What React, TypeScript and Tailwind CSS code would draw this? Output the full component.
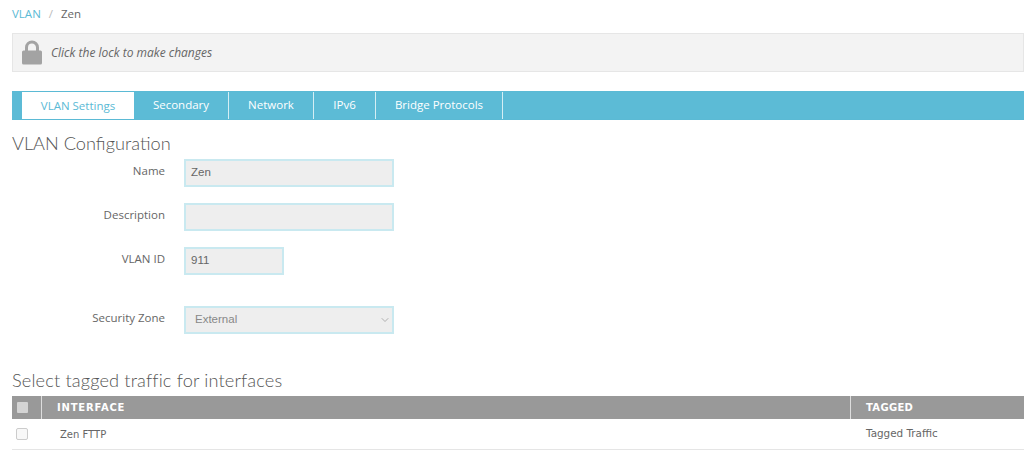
import React from 'react';
import { ChevronDown } from 'lucide-react';

const tabs = [
  { label: 'Secondary', w: 'w-[95px]' },
  { label: 'Network', w: 'w-[85px]' },
  { label: 'IPv6', w: 'w-[62px]' },
  { label: 'Bridge Protocols', w: 'w-[127px]' },
];

const Field = ({ label, children, className }: { label: string; children: React.ReactNode; className: string }) => (
  <div className={`flex items-start ${className}`}>
    <label className="w-[153px] pt-[3px] text-right text-[11.5px] leading-[18px] text-[#666]">{label}</label>
    <div className="ml-[19px]">{children}</div>
  </div>
);

const inputCls =
  'h-[28px] border-2 border-[#c9e9f0] bg-[#eeeeee] px-[5px] flex items-center text-[11.5px] text-[#666] font-["Liberation_Sans",sans-serif]';

export default function App() {
  return (
    <div className="h-[455px] w-[1024px] overflow-hidden bg-white font-['Open_Sans',sans-serif]">
      <div className="flex h-[33px] items-start pl-[12px] pt-[5px] text-[11.5px] leading-[18px]">
        <span className="text-[#5bbad5]">VLAN</span>
        <span className="mx-[8px] text-[#bbb]">/</span>
        <span className="text-[#666]">Zen</span>
      </div>

      <div className="ml-[12px] flex h-[39px] items-center border border-[#e6e6e6] bg-[#f3f3f3] pl-[9px]">
        <svg width="20" height="25" viewBox="0 0 20 25" className="mb-[1px]">
          <path d="M4.5 12V7.5a5.5 5.5 0 0 1 11 0V12" fill="none" stroke="#a3a3a3" strokeWidth="3" />
          <rect x="0" y="10.5" width="20" height="14" rx="1.5" fill="#a3a3a3" />
        </svg>
        <span className="ml-[9px] text-[12px] italic text-[#666]">Click the lock to make changes</span>
      </div>

      <div className="ml-[12px] mt-[19px] flex h-[29px] border-y border-[#5bbad5] bg-[#5cbbd6] pl-[10px] text-[11.5px]">
        <div className="flex w-[112px] items-center justify-center bg-white pt-[1px] text-[#5bbad5]">VLAN Settings</div>
        {tabs.map((t) => (
          <div key={t.label} className={`flex ${t.w} items-center justify-center border-r border-[#d5eef4] pb-[1px] text-white`}>
            {t.label}
          </div>
        ))}
      </div>

      <h2 className="ml-[12px] mt-[10px] text-[18.2px] font-light leading-[26px] text-[#555] font-['Lato',sans-serif]">VLAN Configuration</h2>

      <div className="ml-[12px] mt-[3px]">
        <Field label="Name" className="mb-[16px]">
          <div className={`${inputCls} w-[210px]`}>Zen</div>
        </Field>
        <Field label="Description" className="mb-[16px]">
          <div className={`${inputCls} w-[210px]`} />
        </Field>
        <Field label="VLAN ID" className="mb-[31px]">
          <div className={`${inputCls} w-[100px]`}>911</div>
        </Field>
        <Field label="Security Zone" className="">
          <div className={`${inputCls} w-[210px] justify-between pl-[9px] pr-[1px] text-[#888]`}>
            External
            <ChevronDown size={12} strokeWidth={1.5} className="text-[#999]" />
          </div>
        </Field>
      </div>

      <h2 className="ml-[12px] mt-[33px] text-[18.2px] font-light leading-[26px] tracking-[0.15px] text-[#555] font-['Lato',sans-serif]">Select tagged traffic for interfaces</h2>

      <div className="ml-[12px] mt-[3px] font-['DejaVu_Sans',sans-serif] text-[10px]">
        <div className="flex h-[23px] bg-[#999999] text-[10px] font-bold text-white">
          <div className="flex w-[30px] items-center border-r border-[#dddddd] pl-[5px]">
            <span className="block h-[11px] w-[11px] rounded-[1px] bg-[#d4d4d4]" />
          </div>
          <div className="flex w-[809px] items-center border-r border-[#dddddd] pl-[15px] tracking-[0.8px]">INTERFACE</div>
          <div className="flex flex-1 items-center pl-[15px] tracking-[0.3px]">TAGGED</div>
        </div>
        <div className="flex h-[31px] items-center border-b border-[#e5e5e5] text-[#666]">
          <div className="flex w-[30px] pl-[4px]">
            <span className="block h-[12px] w-[12px] rounded-[2px] border border-[#ccc] bg-[#f8f8f8]" />
          </div>
          <div className="w-[809px] pl-[18px]">Zen FTTP</div>
          <div className="pl-[15px] text-[10.4px]">Tagged Traffic</div>
        </div>
      </div>
    </div>
  );
}
